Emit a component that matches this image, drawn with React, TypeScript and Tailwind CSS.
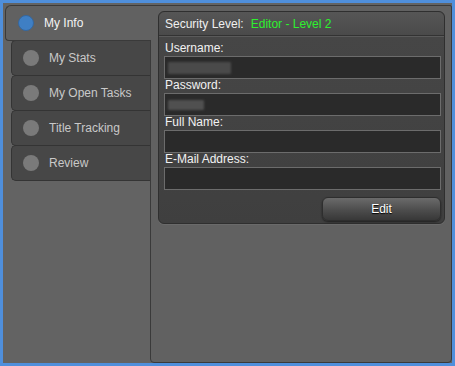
import React from 'react';

const TABS = ['My Info', 'My Stats', 'My Open Tasks', 'Title Tracking', 'Review'];

const FIELDS = [
  { label: 'Username:', blur: 'w-[63px] h-[12px] bg-[#4a4a4a]' },
  { label: 'Password:', blur: 'w-[36px] h-[10px] bg-[#505050]' },
  { label: 'Full Name:', blur: '' },
  { label: 'E-Mail Address:', blur: '' },
];

const Tab: React.FC<{ label: string; active: boolean }> = ({ label, active }) => {
  if (active) {
    return (
      <div className="relative z-10 -mr-px h-[36px] flex items-center pl-[12px] bg-[#616161] border border-r-0 border-[#3a3a3a] rounded-tl-[6px] rounded-bl-[4px]">
        <span className="w-[16px] h-[16px] rounded-full bg-[#3f7fc4] border border-[#35679f]" />
        <span className="ml-[10px] text-[12px] text-[#f4f4f4]">{label}</span>
      </div>
    );
  }
  return (
    <div className="ml-[6px] -mt-px h-[36px] flex items-center pl-[11px] bg-[#474747] border border-r-0 border-[#343434] rounded-l-[5px]">
      <span className="w-[16px] h-[16px] rounded-full bg-[#7a7a7a]" />
      <span className="ml-[10px] text-[12px] text-[#c9c9c9]">{label}</span>
    </div>
  );
};

export default function App() {
  return (
    <div
      className="w-[455px] h-[366px] bg-[#4f8fdc] p-[3px]"
      style={{ fontFamily: '"Liberation Sans", Arial, sans-serif' }}
    >
      <div className="w-full h-full bg-[#636363] flex pt-[2px] pl-[2px]">
        {/* Tabs */}
        <div className="w-[145px] shrink-0 flex flex-col">
          {TABS.map((t, i) => (
            <Tab key={t} label={t} active={i === 0} />
          ))}
        </div>

        {/* Panel */}
        <div className="flex-1 h-full bg-[#616161] border border-[#3a3a3a] rounded-tr-[2px] rounded-b-[4px] pt-[5px] pl-[7px] pr-[6px]">
          <div className="rounded-[6px] border border-[#2f2f2f] bg-gradient-to-b from-[#474747] to-[#3f3f3f] shadow-[0_1px_0_#6a6a6a]">
            {/* Header */}
            <div className="h-[24px] flex items-center pl-[6px] rounded-t-[6px] bg-gradient-to-b from-[#565656] to-[#4a4a4a] border-b border-[#333] text-[12px]">
              <span className="text-[#f0f0f0]">Security Level:</span>
              <span className="ml-[7px] text-[#2ef02e]">Editor - Level 2</span>
            </div>

            {/* Fields */}
            <div className="pt-[5px] pl-[5px] pr-[3px] pb-[2px] border-t border-[#5a5a5a]">
              {FIELDS.map((f) => (
                <div key={f.label}>
                  <div className="h-[14px] leading-[13px] pl-[1px] text-[12px] text-[#f2f2f2]">{f.label}</div>
                  <div className="h-[23px] bg-[#2a2a2a] border border-[#6c6c6c] flex items-center pl-[3px]">
                    {f.blur && <div className={`${f.blur} blur-[1px] rounded-[1px]`} />}
                  </div>
                </div>
              ))}
              <div className="flex justify-end mt-[7px]">
                <button className="w-[119px] h-[24px] rounded-[6px] border border-[#2e2e2e] bg-gradient-to-b from-[#6b6b6b] via-[#4f4f4f] to-[#383838] shadow-[0_1px_2px_rgba(0,0,0,0.5)] text-[12px] text-white [text-shadow:0_1px_1px_#000]">
                  Edit
                </button>
              </div>
            </div>
          </div>
        </div>
      </div>
    </div>
  );
}
